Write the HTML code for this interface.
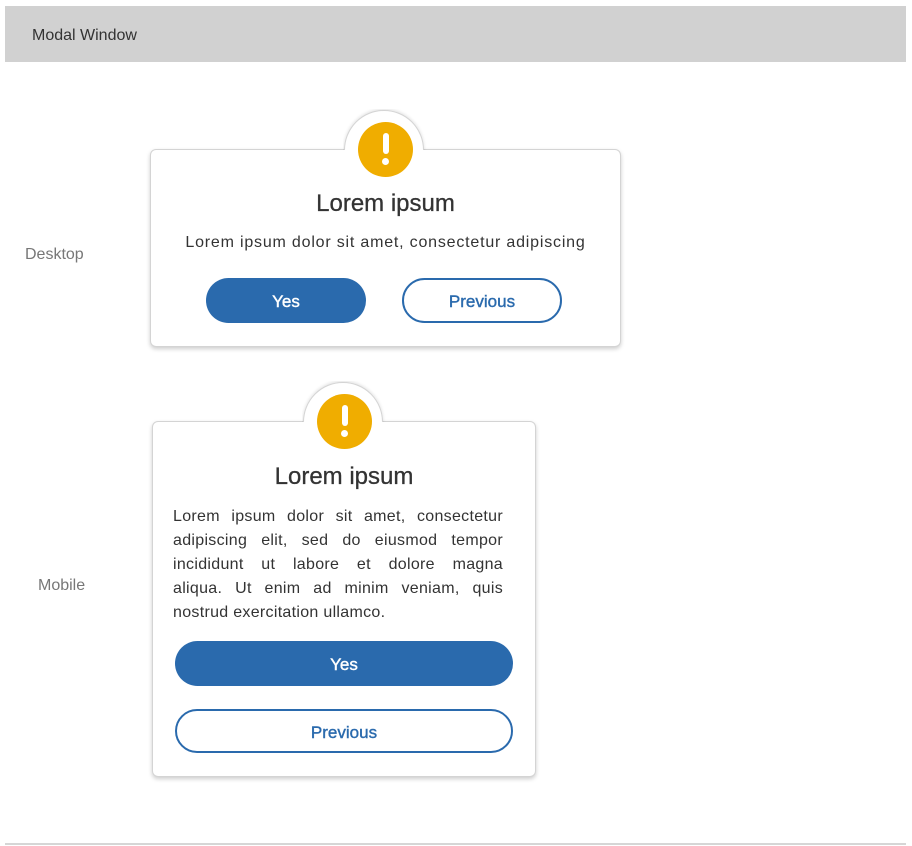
<!DOCTYPE html>
<html><head><meta charset="utf-8"><style>
*{margin:0;padding:0;box-sizing:border-box}
body{width:912px;height:846px;background:#fff;position:relative;overflow:hidden;font-family:"Liberation Sans",sans-serif;color:#333}
.hdr{position:absolute;left:5px;top:6px;width:901px;height:56px;background:#d1d1d1;font-size:16px;color:#333;padding:21px 0 0 27px}
.bot{position:absolute;left:5px;top:843px;width:901px;height:2px;background:#d6d6d6}
.lbl{position:absolute;font-size:16px;color:#777}
.card{position:absolute;background:#fff;border:1px solid #d4d4d4;border-radius:6px;box-shadow:0 2px 4px rgba(0,0,0,.2)}
.bw{position:absolute;overflow:hidden;height:41px;width:84px}
.bump{position:absolute;left:1px;top:1px;width:80px;height:80px;border-radius:50%;background:#fff;border:1px solid #d4d4d4;box-shadow:0 -1px 3px rgba(0,0,0,.12)}
.ic{position:absolute;width:55px;height:55px;border-radius:50%;background:#f0ad00}
.ic:before{content:"";position:absolute;left:24.5px;top:11px;width:6px;height:21px;border-radius:3px;background:#fff}
.ic:after{content:"";position:absolute;left:24px;top:36px;width:7px;height:7px;border-radius:50%;background:#fff}
.t{position:absolute;font-size:24px;text-align:center;color:#333;-webkit-text-stroke:.3px #333}
.btn{position:absolute;border-radius:23px;font-size:17px;text-align:center;-webkit-text-stroke:.4px currentColor}
.y{background:#2a6aad;color:#fff}
.p{border:2px solid #2a6aad;color:#2a6aad;background:#fff}
.par div{text-align:justify;text-align-last:justify;height:24px;font-size:16px;letter-spacing:.3px}
.par div.l{text-align-last:left}
</style></head><body>
<div class="hdr">Modal Window</div>
<div class="lbl" style="left:25px;top:246px">Desktop</div>
<div class="lbl" style="left:38px;top:577px">Mobile</div>

<div class="card" style="left:150px;top:149px;width:471px;height:198px"></div>
<div class="bw" style="left:343px;top:109px"><div class="bump"></div></div>
<div class="ic" style="left:358px;top:122px"></div>
<div class="t" style="left:150px;top:190px;width:471px">Lorem ipsum</div>
<div style="position:absolute;left:150px;top:234px;width:471px;text-align:center;font-size:16px;letter-spacing:.8px">Lorem ipsum dolor sit amet, consectetur adipiscing</div>
<div class="btn y" style="left:206px;top:278px;width:160px;height:45px;line-height:48px">Yes</div>
<div class="btn p" style="left:402px;top:278px;width:160px;height:45px;line-height:44px">Previous</div>

<div class="card" style="left:152px;top:421px;width:384px;height:356px"></div>
<div class="bw" style="left:302px;top:381px"><div class="bump"></div></div>
<div class="ic" style="left:317px;top:394px"></div>
<div class="t" style="left:152px;top:463px;width:384px">Lorem ipsum</div>
<div class="par" style="position:absolute;left:173px;top:508px;width:330px">
<div>Lorem ipsum dolor sit amet, consectetur</div>
<div>adipiscing elit, sed do eiusmod tempor</div>
<div>incididunt ut labore et dolore magna</div>
<div>aliqua. Ut enim ad minim veniam, quis</div>
<div class="l">nostrud exercitation ullamco.</div>
</div>
<div class="btn y" style="left:175px;top:641px;width:338px;height:45px;line-height:48px">Yes</div>
<div class="btn p" style="left:175px;top:709px;width:338px;height:44px;line-height:44px">Previous</div>
<div class="bot"></div>
</body></html>
